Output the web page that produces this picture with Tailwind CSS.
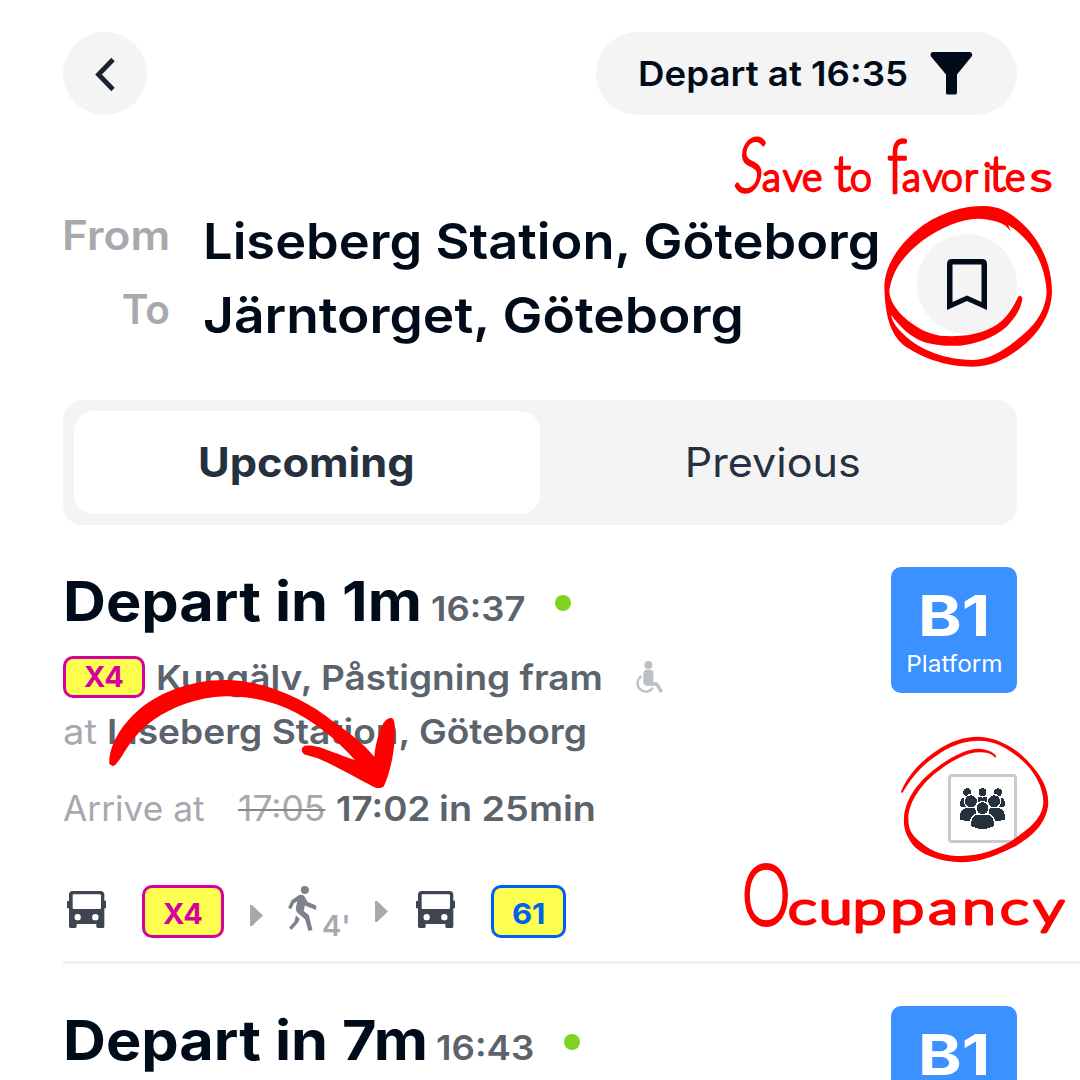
<!DOCTYPE html>
<html lang="en">
<head>
<meta charset="utf-8">
<title>Departures</title>
<script src="https://cdn.jsdelivr.net/npm/@tailwindcss/browser@4"></script>
</head>
<body class="bg-white">
<svg class="hidden">
  <symbol id="bus" viewBox="0 0 117 111"><path fill="#3d4550" fill-rule="evenodd" d="M16 0H101Q111 1 112 10V29H117V52H112V108Q111 111 108 111H92Q88 110 88 107V99H29V107Q28 111 24 111H10Q6 110 6 107V52H0V30H6V10Q7 1 16 0ZM19 10Q17 11 17 13V52Q18 54 20 54H99Q101 54 102 52V13Q101 11 99 10ZM32 69A9.500 9.500 0 1 0 32 88A9.500 9.500 0 1 0 32 69ZM85 69A9.500 9.500 0 1 0 85 88A9.500 9.500 0 1 0 85 69Z"/></symbol>
</svg>
<div class="relative w-[1080px] h-[1080px] overflow-hidden pl-[63px] font-['Inter','Liberation_Sans',sans-serif] font-semibold text-[#010c1a] whitespace-nowrap">

  <header class="pt-8 w-[954px] flex justify-between">
    <button class="w-[84px] h-[83px] rounded-full bg-[#f4f4f4] flex items-center justify-center"><svg class="w-6 h-9" viewBox="0 0 24 36"><path d="M20.500 4L6 19L20.500 34" transform="translate(-.5 -.5)" fill="none" stroke="#192430" stroke-width="4.800"/></svg></button>
    <button class="w-[421px] h-[83px] rounded-full bg-[#f4f4f4] flex items-center pl-[42px] text-[34.7px] leading-[83px]"><span class="w-[292px] text-left"><span class="inline-block origin-left scale-x-[1.057]">Depart at 16:35</span></span><svg class="w-[43px] h-[43px]" viewBox="0 0 43 43"><path fill="#010c1a" d="M2.500 0H40Q43 1 42 4L27 22.500V41Q26.500 42.500 25 42.500H17.500Q16 42.500 16 41V22.500L1 4.500Q-.5 1 2.500 0Z"/></svg></button>
  </header>

  <section class="mt-[89px] flex">
    <div class="w-[107px] text-right text-[40.5px] text-[#a6a9ad] leading-[74px] -mt-[5px]"><div><span class="inline-block origin-right scale-x-[1.09]">From</span></div><div>To</div></div>
    <div class="w-[715px] pl-[33px] text-[50px] leading-[74px]"><div><span class="inline-block origin-left scale-x-[1.048]">Liseberg Station, Göteborg</span></div><div><span class="inline-block origin-left scale-x-[1.066]">Järntorget, Göteborg</span></div></div>
    <button class="ml-[32px] mt-[30px] w-[100px] h-[100px] rounded-full bg-[#f4f4f4] flex items-center justify-center"><svg class="w-10 h-[51px]" viewBox="0 0 40 51"><path fill="#010c1a" fill-rule="evenodd" d="M5 0H35Q40 0 40 5V51L20 42L0 51V5Q0 0 5 0ZM5.500 5.500V43L20 36.500L34.500 43V5.500Z"/></svg></button>
  </section>

  <nav class="mt-[48px] w-[954px] h-[125px] rounded-[20px] bg-[#f4f4f4] p-[11px] flex text-center text-[40.5px] leading-[103px] text-[#263140]">
    <div class="w-[466px] rounded-[20px] bg-white font-bold"><span class="inline-block scale-x-[1.07]">Upcoming</span></div>
    <div class="w-[467px] font-normal"><span class="inline-block scale-x-[1.063]">Previous</span></div>
  </nav>

  <article class="pt-[42px] h-[439px] flex border-b-[3px] border-[#f1f1f2] text-[34.7px] text-[#5b636c]">
    <div class="w-[828px] -mt-px">
      <div class="h-[70px] flex leading-[70px] items-baseline"><span class="w-[368px] text-[55px] font-bold text-[#010c1a]"><span class="inline-block origin-left scale-x-[1.08]">Depart in 1m</span></span><span class="w-[124px]"><span class="inline-block origin-left scale-x-[1.05]">16:37</span></span><i class="w-4 h-4 rounded-full bg-[#7ed321] self-center mt-[3px]"></i></div>
      <div class="mt-[20px] h-[42px] flex items-center leading-[42px]"><span class="w-[82px] h-[42px] border-[3px] border-[#d4009f] rounded-[10px] bg-[#ffff4f] text-[#d4009f] text-[29px] leading-[36px] text-center font-bold">X4</span><span class="ml-[11px] w-[479px]"><span class="inline-block origin-left scale-x-[1.067]">Kungälv, Påstigning fram</span></span><svg class="w-7 h-[33px]" viewBox="0 0 84 99"><g fill="#bcc0c5"><circle cx="40" cy="12" r="12"/><path d="M25 35Q26 27 33 26H47Q55 27 55 35V64H65Q69 65 71 68L84 91L75 96L62 74H35Q25 72 25 63Z"/></g><path fill="none" stroke="#bcc0c5" stroke-width="7" d="M19 46A25 25 0 1 0 54 80"/></svg></div>
      <div class="mt-[12px] h-[42px] leading-[42px] flex"><span class="w-[44px] font-normal text-[#a6a9ad]"><span class="inline-block origin-left scale-x-[1.1]">at</span></span><span class="inline-block origin-left scale-x-[1.07]">Liseberg Station, Göteborg</span></div>
      <div class="mt-[35px] h-[42px] leading-[42px] flex"><span class="w-[175px] font-normal text-[#a6a9ad]"><span class="inline-block origin-left scale-x-[1.018]">Arrive at</span></span><span class="w-[98px] font-normal text-[#a6a9ad]"><span class="inline-block origin-left scale-x-[1.02] line-through decoration-[#83888f] decoration-2">17:05</span></span><span class="w-[103px]"><span class="inline-block origin-left scale-x-[1.06]">17:02</span></span><span class="inline-block origin-left scale-x-[1.09]">in 25min</span></div>
      <div class="mt-[56px] h-[53px] flex text-[29px] leading-[51px]">
        <svg class="ml-1 mt-[6px] w-[39px] h-[37px]"><use href="#bus"/></svg>
        <span class="ml-[36px] w-[82px] border-[3px] border-[#d4009f] rounded-[10px] bg-[#ffff4f] text-[#d4009f] text-center font-bold">X4</span>
        <svg class="ml-[26px] mt-[20px] w-[13px] h-[21px]" viewBox="0 0 13 21"><path fill="#a6a9ad" d="M0 0H2L13 10.500L2 21H0Z"/></svg>
        <svg class="ml-[25px] mt-px w-[29px] h-[45px]" viewBox="745 77 85 133"><g fill="#7d838a"><circle cx="794.500" cy="89" r="12"/><path d="M776 104Q785 101 792 106L803 124L828 135V148L799 137L795 133L791 151L806 163L817 207L805 210L795 175L772 155Q766 150 768 141L772 122L762 129L754 146L745 141L755 119Z"/><path d="M768 164L779 174L775 184L755 207L748 200L764 181Z"/></g></svg>
        <span class="ml-[5px] mt-[15px] w-[53px] font-semibold text-[#a6a9ad]">4'</span>
        <svg class="mt-[16px] w-[13px] h-[21px]" viewBox="0 0 13 21"><path fill="#a6a9ad" d="M0 0H2L13 10.500L2 21H0Z"/></svg>
        <svg class="ml-[28px] mt-[6px] w-[39px] h-[37px]"><use href="#bus"/></svg>
        <span class="ml-[36px] w-[75px] border-[3px] border-[#0060f0] rounded-[10px] bg-[#ffff4f] text-[#0060f0] text-center font-bold"><span class="inline-block scale-x-[1.07]">61</span></span>
      </div>
    </div>
    <div class="w-[126px]">
      <div class="h-[126px] rounded-[10px] bg-[#3a91ff] text-white text-center pt-[19px]"><div class="text-[57px] leading-[60px] font-bold"><span class="inline-block scale-x-[1.16]">B1</span></div><div class="text-[23px] leading-[37px] font-normal"><span class="inline-block scale-x-[1.06]">Platform</span></div></div>
      <div class="ml-[57px] mt-[81px] w-[69px] h-[69px] border-[3px] border-[#c9cacf] rounded-[4px] flex items-center justify-center"><svg class="w-[47px] h-[41px]" viewBox="266 203 142 124" shape-rendering="crispEdges"><g fill="#26313d" stroke="#fff" stroke-width="4"><path d="M266 250Q268 230 286 230H300V262H270ZM408 250Q406 230 388 230H374V262H404Z"/><path d="M322 229H352V250H322Z"/><circle cx="291" cy="216" r="14"/><circle cx="337" cy="216" r="14"/><circle cx="384" cy="216" r="14"/><path d="M268 302V282Q270 262 290 262H318V304H290ZM406 302V282Q404 262 384 262H356V304H384Z"/><circle cx="302" cy="243" r="20"/><circle cx="372" cy="243" r="20"/><path d="M301 320V305Q304 283 325 282H350Q371 284 373 305V320L350 328H324Z"/><circle cx="337" cy="264" r="20"/></g></svg></div>
    </div>
  </article>

  <article class="pt-[42px] flex text-[34.7px] text-[#5b636c]">
    <div class="-mt-px w-[828px] h-[70px] flex leading-[70px] items-baseline"><span class="w-[373px] text-[55px] font-bold text-[#010c1a]"><span class="inline-block origin-left scale-x-[1.08]">Depart in 7m</span></span><span class="w-[128px]"><span class="inline-block origin-left scale-x-[1.055]">16:43</span></span><i class="w-4 h-4 rounded-full bg-[#7ed321] self-center mt-[3px]"></i></div>
    <div class="w-[126px] h-[126px] rounded-[10px] bg-[#3a91ff] text-white text-center pt-[19px] text-[57px] leading-[60px] font-bold"><span class="inline-block scale-x-[1.16]">B1</span></div>
  </article>

  <svg class="absolute inset-0" width="1080" height="1080" viewBox="0 0 1080 1080">
    <g fill="#f00" fill-rule="evenodd">
      <path transform="translate(860 190) scale(.33333)" d="M73 290C75 215 130 150 190 105C250 65 310 48 370 48C420 49 445 65 475 90C530 135 575 210 576 305C574 380 530 435 480 475C430 512 390 530 340 530C250 530 180 500 130 465C90 430 80 380 75 330ZM88 300C100 230 140 190 190 150C240 115 300 86 355 86C400 88 420 97 437 107L452 124L444 105C520 150 556 230 560 305C556 370 520 410 470 450C420 490 380 510 335 510C250 508 190 480 150 450C115 420 98 400 93 374C120 410 150 440 190 455C230 468 270 468 300 467C350 460 400 445 440 410C470 380 485 350 487 325C485 315 476 315 474 322C450 370 430 400 380 420C330 440 280 440 240 437C190 430 150 400 120 370C100 345 88 325 88 300Z"/>
      <path transform="translate(40 560) scale(.33333)" d="M208 612C206 560 240 500 290 455C350 400 450 360 555 360C680 362 800 420 880 485C930 520 970 550 1003 590C1005 560 1015 520 1030 490C1040 475 1055 470 1060 478C1066 490 1067 520 1062 560C1058 600 1045 650 1032 678C1025 686 1010 686 1000 680C960 660 900 625 850 602C830 592 810 588 795 584C782 578 782 562 795 557C830 552 870 575 945 600C890 540 820 480 740 445C680 420 620 408 555 409C470 412 400 440 340 480C280 525 265 560 240 597C230 610 225 618 218 618Z"/>
      <path transform="translate(870 720) scale(.33333)" d="M93 216C110 170 150 125 200 92C240 65 280 50 325 50C380 52 430 80 465 115C510 160 535 200 535 250C530 320 470 360 430 382C370 412 320 427 275 427C210 425 150 405 125 370C105 340 100 320 102 290C108 230 150 180 200 143C240 112 290 86 325 86C355 88 375 98 379 110L375 113C365 100 350 97 325 97C290 98 240 125 205 153C160 185 115 245 115 295C115 330 125 345 150 365C190 400 230 408 275 408C330 406 380 390 425 362C470 330 518 300 520 245C520 200 490 150 455 120C420 90 380 62 325 62C270 62 220 90 195 110C150 140 120 180 97 219Z"/>
    </g>
    <g class="font-['Lato',sans-serif] font-light" fill="#f00" stroke="#f00" stroke-width="2.300" stroke-linejoin="round">
      <g font-size="39">
        <text transform="translate(732 192) skewX(-10) scale(.7 1)" font-size="76">S</text>
        <text x="762 783 802" y="191">ave</text>
        <text x="834 850" y="191"><tspan font-size="50">t</tspan><tspan>o</tspan></text>
        <text transform="translate(887 193) scale(.8 1)" font-size="74">f</text>
        <text x="902 923 941 964 983 989 1005" y="191">avori<tspan font-size="50">t</tspan>e</text>
        <text transform="translate(1030 191) scale(1.35 1)">s</text>
      </g>
      <g font-size="45" stroke-width="3">
        <text transform="translate(742 925) scale(.72 1)" font-size="85">O</text>
        <text transform="translate(788 924) scale(1.35 1)" x="0 23 48 76 104 129 157 182" y="0">cuppancy</text>
      </g>
    </g>
  </svg>
</div>
</body>
</html>
